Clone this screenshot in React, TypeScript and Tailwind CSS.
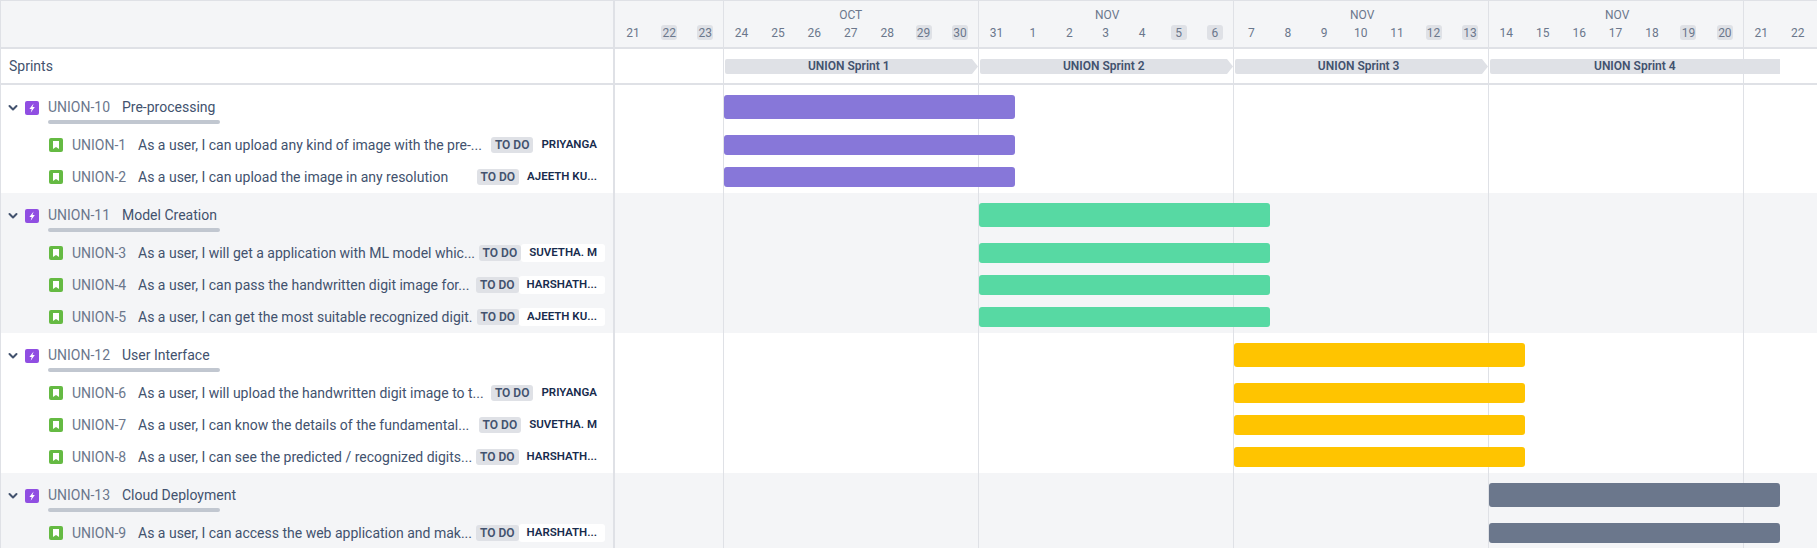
const FONT = "font-['Roboto','Noto_Sans',sans-serif]";

interface Story {
  id: string;
  summary: string;
  assignee: string;
}

interface Epic {
  id: string;
  name: string;
  barClass: string;
  stories: Story[];
}

const epics: Epic[] = [
  {
    id: "UNION-10",
    name: "Pre-processing",
    barClass: "bg-[#8777d9] col-start-[4] col-end-[12]",
    stories: [
      { id: "UNION-1", summary: "As a user, I can upload any kind of image with the pre-...", assignee: "PRIYANGA" },
      { id: "UNION-2", summary: "As a user, I can upload the image in any resolution", assignee: "AJEETH KU..." },
    ],
  },
  {
    id: "UNION-11",
    name: "Model Creation",
    barClass: "bg-[#57d9a3] col-start-[11] col-end-[19]",
    stories: [
      { id: "UNION-3", summary: "As a user, I will get a application with ML model whic...", assignee: "SUVETHA. M" },
      { id: "UNION-4", summary: "As a user, I can pass the handwritten digit image for...", assignee: "HARSHATH..." },
      { id: "UNION-5", summary: "As a user, I can get the most suitable recognized digit.", assignee: "AJEETH KU..." },
    ],
  },
  {
    id: "UNION-12",
    name: "User Interface",
    barClass: "bg-[#ffc400] col-start-[18] col-end-[26]",
    stories: [
      { id: "UNION-6", summary: "As a user, I will upload the handwritten digit image to t...", assignee: "PRIYANGA" },
      { id: "UNION-7", summary: "As a user, I can know the details of the fundamental...", assignee: "SUVETHA. M" },
      { id: "UNION-8", summary: "As a user, I can see the predicted / recognized digits...", assignee: "HARSHATH..." },
    ],
  },
  {
    id: "UNION-13",
    name: "Cloud Deployment",
    barClass: "bg-[#6b778c] col-start-[25] col-end-[33]",
    stories: [
      { id: "UNION-9", summary: "As a user, I can access the web application and mak...", assignee: "HARSHATH..." },
    ],
  },
];

const days = [21, 22, 23, 24, 25, 26, 27, 28, 29, 30, 31, 1, 2, 3, 4, 5, 6, 7, 8, 9, 10, 11, 12, 13, 14, 15, 16, 17, 18, 19, 20, 21, 22];
const weekends = [1, 2, 8, 9, 15, 16, 22, 23, 29, 30];

const GRID = "grid grid-cols-[repeat(3,36.1px)_repeat(30,36.43px)]";

function WeekLines() {
  return (
    <>
      <div className="col-start-[4] col-end-[11] row-start-1 row-end-3 border-l border-[#dfe1e6]" />
      <div className="col-start-[11] col-end-[18] row-start-1 row-end-3 border-l border-[#dfe1e6]" />
      <div className="col-start-[18] col-end-[25] row-start-1 row-end-3 border-l border-[#dfe1e6]" />
      <div className="col-start-[25] col-end-[32] row-start-1 row-end-3 border-l border-[#dfe1e6]" />
      <div className="col-start-[32] col-end-[34] row-start-1 row-end-3 border-l border-[#dfe1e6]" />
    </>
  );
}

function EpicIcon() {
  return (
    <svg width="14" height="14" viewBox="0 0 14 14" className="shrink-0">
      <rect width="14" height="14" rx="2" fill="#904ee2" />
      <path d="M8.6 2.5 4.4 8h2.3l-1 3.7 4.1-5.6H7.5z" fill="#fff" />
    </svg>
  );
}

function StoryIcon() {
  return (
    <svg width="14" height="14" viewBox="0 0 14 14" className="shrink-0">
      <rect width="14" height="14" rx="2" fill="#65ba43" />
      <path d="M4 3h6v8L7 9l-3 2z" fill="#fff" />
    </svg>
  );
}

function Chevron() {
  return (
    <svg width="10" height="8" viewBox="0 0 10 8" className="shrink-0">
      <path d="M1.5 2 5 5.5 8.5 2" fill="none" stroke="#42526e" strokeWidth="2" strokeLinecap="round" strokeLinejoin="round" />
    </svg>
  );
}

function Bar({ className, height }: { className: string; height: string }) {
  return <div className={`row-start-1 self-center ml-px rounded-[3px] ${height} ${className}`} />;
}

function SprintBar({ label, className, arrow = true }: { label: string; className: string; arrow?: boolean }) {
  return (
    <div className={`row-start-1 self-center flex items-center h-[15px] ml-[2px] ${className}`}>
      <div className="flex-1 h-full bg-[#dfe1e6] rounded-l-[2px] flex items-center justify-center text-[12px] font-semibold text-[#42526e] leading-none">
        {label}
      </div>
      {arrow ? (
        <svg width="6" height="15" viewBox="0 0 6 15" className="shrink-0">
          <path d="M0 0 6 7.5 0 15z" fill="#dfe1e6" />
        </svg>
      ) : null}
    </div>
  );
}

function Lozenge() {
  return (
    <span className="shrink-0 rounded-[3px] bg-[#dfe1e6] px-1 h-[16px] flex items-center text-[12px] font-semibold text-[#42526e] leading-none">
      TO DO
    </span>
  );
}

function StoryRow({ story, barClass, shaded }: { story: Story; barClass: string; shaded: boolean }) {
  return (
    <div className="flex h-8">
      <div className="w-[614px] shrink-0 border-r-2 border-[#dfe1e6] flex items-center pl-[48px] pr-2">
        <StoryIcon />
        <span className="ml-[9px] w-[66px] shrink-0 text-[14px] text-[#6b778c] whitespace-nowrap">{story.id}</span>
        <span className="flex-1 min-w-0 text-[14px] text-[#42526e] whitespace-nowrap">{story.summary}</span>
        <Lozenge />
        <span className={`shrink-0 rounded-[3px] px-2 h-[18px] flex items-center text-[11.5px] font-semibold text-[#172b4d] leading-none ${shaded ? "bg-white" : ""}`}>
          {story.assignee}
        </span>
      </div>
      <div className={`${GRID} flex-1 grid-rows-[1fr]`}>
        <WeekLines />
        <Bar className={barClass} height="h-5" />
      </div>
    </div>
  );
}

function EpicGroup({ epic, shaded }: { epic: Epic; shaded: boolean }) {
  return (
    <div className={shaded ? "bg-[#f4f5f7]" : "bg-white"}>
      <div className="flex h-11">
        <div className="w-[614px] shrink-0 border-r-2 border-[#dfe1e6] pl-[7px] pt-[12px]">
          <div className="flex items-center">
            <Chevron />
            <span className="ml-[7px]"><EpicIcon /></span>
            <span className="ml-[9px] w-[74px] shrink-0 text-[14px] text-[#6b778c] whitespace-nowrap">{epic.id}</span>
            <span className="text-[14px] text-[#42526e] whitespace-nowrap">{epic.name}</span>
          </div>
          <div className="ml-[40px] mt-[2px] h-[4px] w-[172px] rounded-[2px] bg-[#c1c7d0]" />
        </div>
        <div className={`${GRID} flex-1 grid-rows-[1fr]`}>
          <WeekLines />
          <Bar className={epic.barClass} height="h-6" />
        </div>
      </div>
      {epic.stories.map((s) => (
        <StoryRow key={s.id} story={s} barClass={epic.barClass} shaded={shaded} />
      ))}
    </div>
  );
}

export default function App() {
  return (
    <div className={`${FONT} h-[548px] overflow-hidden border-t border-l border-[#dfe1e6] bg-white`}>
      <div className="flex h-12 bg-[#f4f5f7] border-b-2 border-[#dfe1e6]">
        <div className="w-[614px] shrink-0 border-r-2 border-[#dfe1e6]" />
        <div className={`${GRID} flex-1 grid-rows-[24px_22px]`}>
          <WeekLines />
          <div className="col-start-[4] col-end-[11] row-start-1 text-center text-[12px] leading-[24px] pt-[2px] text-[#6b778c]">OCT</div>
          <div className="col-start-[11] col-end-[18] row-start-1 text-center text-[12px] leading-[24px] pt-[2px] pl-[3px] text-[#6b778c]">NOV</div>
          <div className="col-start-[18] col-end-[25] row-start-1 text-center text-[12px] leading-[24px] pt-[2px] pl-[3px] text-[#6b778c]">NOV</div>
          <div className="col-start-[25] col-end-[32] row-start-1 text-center text-[12px] leading-[24px] pt-[2px] pl-[3px] text-[#6b778c]">NOV</div>
          {days.map((d, i) => (
            <div key={i} style={{ gridColumnStart: i + 1 }} className="row-start-2 flex justify-center items-start">
              <span className={`w-4 h-[15px] flex items-center justify-center rounded-[3px] text-[12px] leading-none text-[#6b778c] ${weekends.includes(i) ? "bg-[#dfe1e6]" : ""}`}>
                {d}
              </span>
            </div>
          ))}
        </div>
      </div>
      <div className="flex h-9 border-b-2 border-[#dfe1e6]">
        <div className="w-[614px] shrink-0 border-r-2 border-[#dfe1e6] flex items-center pl-2 text-[14px] text-[#42526e]">Sprints</div>
        <div className={`${GRID} flex-1 grid-rows-[1fr]`}>
          <WeekLines />
          <SprintBar label="UNION Sprint 1" className="col-start-[4] col-end-[11]" />
          <SprintBar label="UNION Sprint 2" className="col-start-[11] col-end-[18]" />
          <SprintBar label="UNION Sprint 3" className="col-start-[18] col-end-[25]" />
          <SprintBar label="UNION Sprint 4" className="col-start-[25] col-end-[33]" arrow={false} />
        </div>
      </div>
      {epics.map((e, i) => (
        <EpicGroup key={e.id} epic={e} shaded={i % 2 === 1} />
      ))}
    </div>
  );
}
